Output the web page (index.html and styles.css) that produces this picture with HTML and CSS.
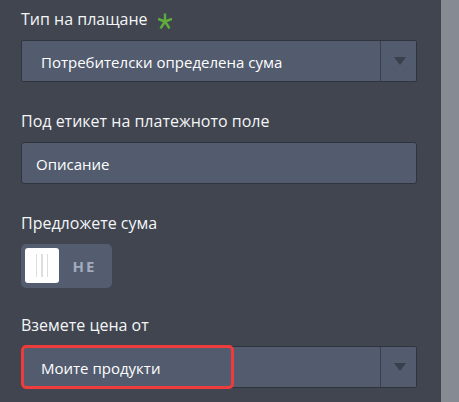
FILE: index.html
```html
<!DOCTYPE html>
<html>
<head>
<meta charset="utf-8">
<link rel="stylesheet" href="styles.css">
</head>
<body>
<div class="page">
  <div class="panel">
    <div class="group">
      <div class="label">Тип на плащане <svg class="star" width="14" height="16" viewBox="0 0 14 16"><g stroke="#5fae3a" stroke-width="2.4" stroke-linecap="butt"><line x1="7" y1="8.5" x2="7" y2="0.5"/><line x1="7" y1="8.5" x2="0" y2="6"/><line x1="7" y1="8.5" x2="14" y2="6"/><line x1="7" y1="8.5" x2="2.5" y2="15.5"/><line x1="7" y1="8.5" x2="11.5" y2="15.5"/></g></svg></div>
      <div class="select">
        <div class="select-text">Потребителски определена сума</div>
        <div class="select-arrow"><span class="tri"></span></div>
      </div>
    </div>
    <div class="group">
      <div class="label">Под етикет на платежното поле</div>
      <div class="input">Описание</div>
    </div>
    <div class="group group-toggle">
      <div class="label">Предложете сума</div>
      <div class="toggle">
        <div class="knob"><span></span><span></span><span></span></div>
        <div class="toggle-text">НЕ</div>
      </div>
    </div>
    <div class="group">
      <div class="label">Вземете цена от</div>
      <div class="select highlighted">
        <div class="select-text">Моите продукти</div>
        <div class="select-arrow"><span class="tri"></span></div>
        <div class="highlight"></div>
      </div>
    </div>
  </div>
  <div class="strip"></div>
</div>
</body>
</html>
```

FILE: styles.css
```css
html, body {
  margin: 0;
  padding: 0;
}
body {
  background: #40454f;
  font-family: "Open Sans", "Noto Sans", sans-serif;
  color: #ffffff;
  overflow: hidden;
}
.page {
  display: flex;
  width: 459px;
  height: 402px;
}
.panel {
  width: 441px;
  padding: 9px 0 0 21px;
  box-sizing: border-box;
  background: #40454f;
}
.strip {
  width: 18px;
  background: #868a93;
}
.group {
  margin-bottom: 29px;
}
.group-toggle {
  margin-bottom: 27px;
}
.label {
  font-size: 16px;
  line-height: 20px;
  height: 20px;
  margin-bottom: 11px;
  display: flex;
  align-items: center;
  white-space: nowrap;
  color: #f4f5f7;
}
.star {
  margin-left: 10px;
  margin-top: 3px;
}
.select {
  position: relative;
  width: 396px;
  height: 42px;
  box-sizing: border-box;
  background: #525c6e;
  border: 1px solid #2f343d;
  border-radius: 2px;
  display: flex;
}
.select-text {
  flex: 1;
  display: flex;
  align-items: center;
  padding-left: 19px;
  font-size: 15px;
  padding-top: 1px;
}
.select-arrow {
  width: 35px;
  border-left: 1px solid #39404b;
  display: flex;
  align-items: center;
  justify-content: center;
}
.tri {
  width: 0;
  height: 0;
  border-left: 6px solid transparent;
  border-right: 6px solid transparent;
  border-top: 8px solid #3a404b;
  margin-left: 2px;
}
.input {
  width: 396px;
  height: 42px;
  box-sizing: border-box;
  background: #525c6e;
  border: 1px solid #2f343d;
  border-radius: 3px;
  display: flex;
  align-items: center;
  padding-left: 14px;
  padding-top: 2px;
  font-size: 15px;
}
.toggle {
  width: 91px;
  height: 44px;
  box-sizing: border-box;
  background: #535d6f;
  border-radius: 5px;
  padding: 4px;
  display: flex;
}
.knob {
  width: 34px;
  height: 35px;
  background: #ffffff;
  border-radius: 3px;
  display: flex;
  justify-content: center;
  align-items: center;
  gap: 4px;
}
.knob span {
  width: 1.5px;
  height: 23px;
  background: #dedede;
}
.toggle-text {
  flex: 1;
  display: flex;
  align-items: center;
  justify-content: center;
  font-size: 15px;
  font-weight: 700;
  letter-spacing: 2px;
  color: #a2abbd;
  padding-left: 2px;
}
.highlight {
  position: absolute;
  left: -1px;
  top: -2px;
  width: 213px;
  height: 44px;
  box-sizing: border-box;
  border: 3px solid #ee3b3b;
  border-radius: 5px;
}
```
